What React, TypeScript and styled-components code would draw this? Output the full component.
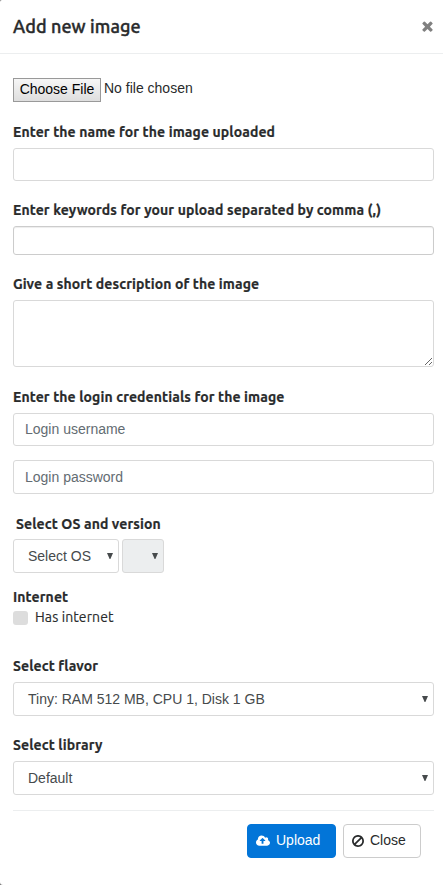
import React from "react";
import styled, { createGlobalStyle } from "styled-components";

const GlobalStyle = createGlobalStyle`
  * { box-sizing: border-box; }
  body { margin: 0; background: #777; color: #292b2c; }
`;

const Modal = styled.div`
  width: 443px;
  height: 885px;
  overflow: hidden;
  border-radius: 2px 0 0 3px;
  background: #fff;
  font: 14px/20px "Liberation Sans", Arial, sans-serif;
`;

const Header = styled.header`
  display: flex;
  align-items: center;
  justify-content: space-between;
  height: 54px;
  padding: 0 10px 1px 13px;
  border-bottom: 1px solid #eceeef;
`;

const Title = styled.h1`
  margin: 0;
  font: 500 18px/24px Ubuntu, "Noto Sans", sans-serif;
  letter-spacing: 0.1px;
  -webkit-text-stroke: 0.4px currentColor;
`;

const CloseIconButton = styled.button`
  display: flex;
  padding: 0;
  border: 0;
  background: none;
  color: #808080;
`;

const Form = styled.form`
  display: flex;
  flex-direction: column;
  padding: 24px 9px 0 13px;
`;

const FileRow = styled.div`
  display: flex;
  gap: 3px;
  height: 24px;
  margin-bottom: 20px;
`;

const FileButton = styled.button`
  width: 88px;
  height: 24px;
  padding: 0 0 2px;
  border: 1px solid #999;
  background: linear-gradient(#f6f6f6, #dedede);
  color: #000;
  font: inherit;
  white-space: nowrap;
`;

const Label = styled.label`
  height: 20px;
  margin-bottom: 6px;
  font: 700 14px/20px Ubuntu, "Noto Sans", sans-serif;
  letter-spacing: 0.11px;
  -webkit-text-stroke: 0.2px currentColor;
  white-space: nowrap;
`;

const OsLabel = styled(Label)`
  margin-bottom: 5px;
  padding-left: 3px;
`;

const Input = styled.input<{ $h?: number; $gap: number; $strong?: boolean }>`
  width: 100%;
  height: ${(p) => p.$h ?? 33}px;
  margin: 0 0 ${(p) => p.$gap}px;
  padding: 0 11px 1px;
  border: 1px solid ${(p) => (p.$strong ? "#ccc" : "#d9d9d9")};
  border-radius: 3px;
  box-shadow: ${(p) => (p.$strong ? "inset 0 1px 1px rgba(0, 0, 0, 0.075)" : "none")};
  background: #fff;
  font: inherit;
  outline: 0;
  &::placeholder { color: #636c72; opacity: 1; }
`;

const TextArea = styled.textarea`
  display: block;
  width: 100%;
  height: 67px;
  margin: 0 0 20px;
  border: 1px solid #d9d9d9;
  border-radius: 3px;
  background: #fff;
  outline: 0;
`;

const SelectRow = styled.div<{ $gap: number }>`
  display: flex;
  gap: 3px;
  margin-bottom: ${(p) => p.$gap}px;
`;

const SelectBox = styled.div<{ $w?: number; $disabled?: boolean }>`
  display: flex;
  align-items: center;
  justify-content: space-between;
  width: ${(p) => (p.$w ? `${p.$w}px` : "100%")};
  height: 34px;
  padding: 0 5px 0 14px;
  border: 1px solid #d9d9d9;
  border-radius: 3px;
  background: ${(p) => (p.$disabled ? "#eceeef" : "#fff")};
  color: #464a4c;
`;

const CheckGroup = styled.div`
  display: flex;
  flex-direction: column;
  margin-bottom: 29px;
`;

const GroupLabel = styled(Label)`
  margin-bottom: 0;
`;

const CheckRow = styled.div`
  display: flex;
  align-items: center;
  gap: 7px;
  height: 20px;
  font: 14px/20px Ubuntu, "Noto Sans", sans-serif;
  letter-spacing: 0.1px;
  -webkit-text-stroke: 0.15px currentColor;
`;

const CheckBox = styled.span`
  width: 15px;
  height: 14px;
  margin-top: 2px;
  border-radius: 3px;
  background: #ddd;
`;

const Footer = styled.footer`
  display: flex;
  justify-content: flex-end;
  gap: 7px;
  padding: 13px 13px 0 0;
  border-top: 1px solid #eceeef;
`;

const ActionButton = styled.button<{ $primary?: boolean }>`
  display: flex;
  align-items: center;
  gap: 6px;
  width: ${(p) => (p.$primary ? 89 : 78)}px;
  height: 34px;
  padding: 0 0 0 8px;
  border: 1px solid ${(p) => (p.$primary ? "#0275d8" : "#ccc")};
  border-radius: 4px;
  background: ${(p) => (p.$primary ? "#0275d8" : "#fff")};
  color: ${(p) => (p.$primary ? "#fff" : "#292b2c")};
  font: inherit;
`;

const ActionText = styled.span`
  padding-bottom: 2px;
`;

const TimesIcon = () => (
  <svg width="11" height="11" viewBox="302 346 1188 1268" fill="currentColor">
    <path transform="translate(0 40)" d="M1490 1322q0 40-28 68l-136 136q-28 28-68 28t-68-28l-294-294-294 294q-28 28-68 28t-68-28l-136-136q-28-28-28-68t28-68l294-294-294-294q-28-28-28-68t28-68l136-136q28-28 68-28t68 28l294 294 294-294q28-28 68-28t68 28l136 136q28 28 28 68t-28 68l-294 294 294 294q28 28 28 68z" />
  </svg>
);

const CloudIcon = () => (
  <svg width="14" height="14" viewBox="-64 0 1920 1792" fill="currentColor">
    <path d="M1216 864q0-14-9-23l-352-352q-9-9-23-9t-23 9l-351 351q-10 12-10 24 0 14 9 23t23 9h224v352q0 13 9.500 22.500t22.500 9.500h192q13 0 22.500-9.500t9.500-22.500v-352h224q13 0 22.500-9.500t9.500-22.500zm640 288q0 159-112.500 271.500t-271.500 112.500h-1088q-185 0-316.500-131.500t-131.500-316.500q0-130 70-240t188-165q-2-30-2-43 0-212 150-362t362-150q156 0 285.500 87t188.500 231q71-62 166-62 106 0 181 75t75 181q0 76-41 138 130 31 213.500 135.500t83.500 238.500z" />
  </svg>
);

const BanIcon = () => (
  <svg width="12" height="12" viewBox="128 125 1536 1542" fill="currentColor">
    <path d="M1440 893q0-161-87-295l-754 753q137 89 297 89 111 0 211.500-43.500t173.500-116.500 116-174.500 43-212.500zm-999 299l755-754q-135-91-300-91-148 0-273 73t-198 199-73 274q0 162 89 299zm1223-299q0 157-61 300t-163.500 246-245 164-298.500 61-298.500-61-245-164-163.500-246-61-300 61-299.500 163.500-245.500 245-164 298.500-61 298.500 61 245 164 163.500 245.500 61 299.500z" />
  </svg>
);

const Caret = () => (
  <svg width="6" height="6" viewBox="0 0 6 6" fill="#464a4c">
    <path d="M0 0h6L3.400 6h-.8z" />
  </svg>
);

export default function App() {
  return (
    <Modal>
      <GlobalStyle />
      <Header>
        <Title>Add new image</Title>
        <CloseIconButton aria-label="Close"><TimesIcon /></CloseIconButton>
      </Header>
      <Form>
        <FileRow>
          <FileButton type="button">Choose File</FileButton>
          <span>No file chosen</span>
        </FileRow>
        <Label>Enter the name for the image uploaded</Label>
        <Input $gap={19} />
        <Label>Enter keywords for your upload separated by comma (,)</Label>
        <Input $h={29} $gap={19} $strong />
        <Label>Give a short description of the image</Label>
        <TextArea />
        <Label>Enter the login credentials for the image</Label>
        <Input $gap={14} placeholder="Login username" />
        <Input $h={34} $gap={20} placeholder="Login password" />
        <OsLabel>Select OS and version</OsLabel>
        <SelectRow $gap={14}>
          <SelectBox $w={106}>Select OS<Caret /></SelectBox>
          <SelectBox $w={42} $disabled><span /><Caret /></SelectBox>
        </SelectRow>
        <CheckGroup>
          <GroupLabel>Internet</GroupLabel>
          <CheckRow><CheckBox /><span>Has internet</span></CheckRow>
        </CheckGroup>
        <Label>Select flavor</Label>
        <SelectRow $gap={19}>
          <SelectBox>Tiny: RAM 512 MB, CPU 1, Disk 1 GB<Caret /></SelectBox>
        </SelectRow>
        <Label>Select library</Label>
        <SelectRow $gap={15}>
          <SelectBox>Default<Caret /></SelectBox>
        </SelectRow>
        <Footer>
          <ActionButton type="button" $primary><CloudIcon /><ActionText>Upload</ActionText></ActionButton>
          <ActionButton type="button"><BanIcon /><ActionText>Close</ActionText></ActionButton>
        </Footer>
      </Form>
    </Modal>
  );
}
